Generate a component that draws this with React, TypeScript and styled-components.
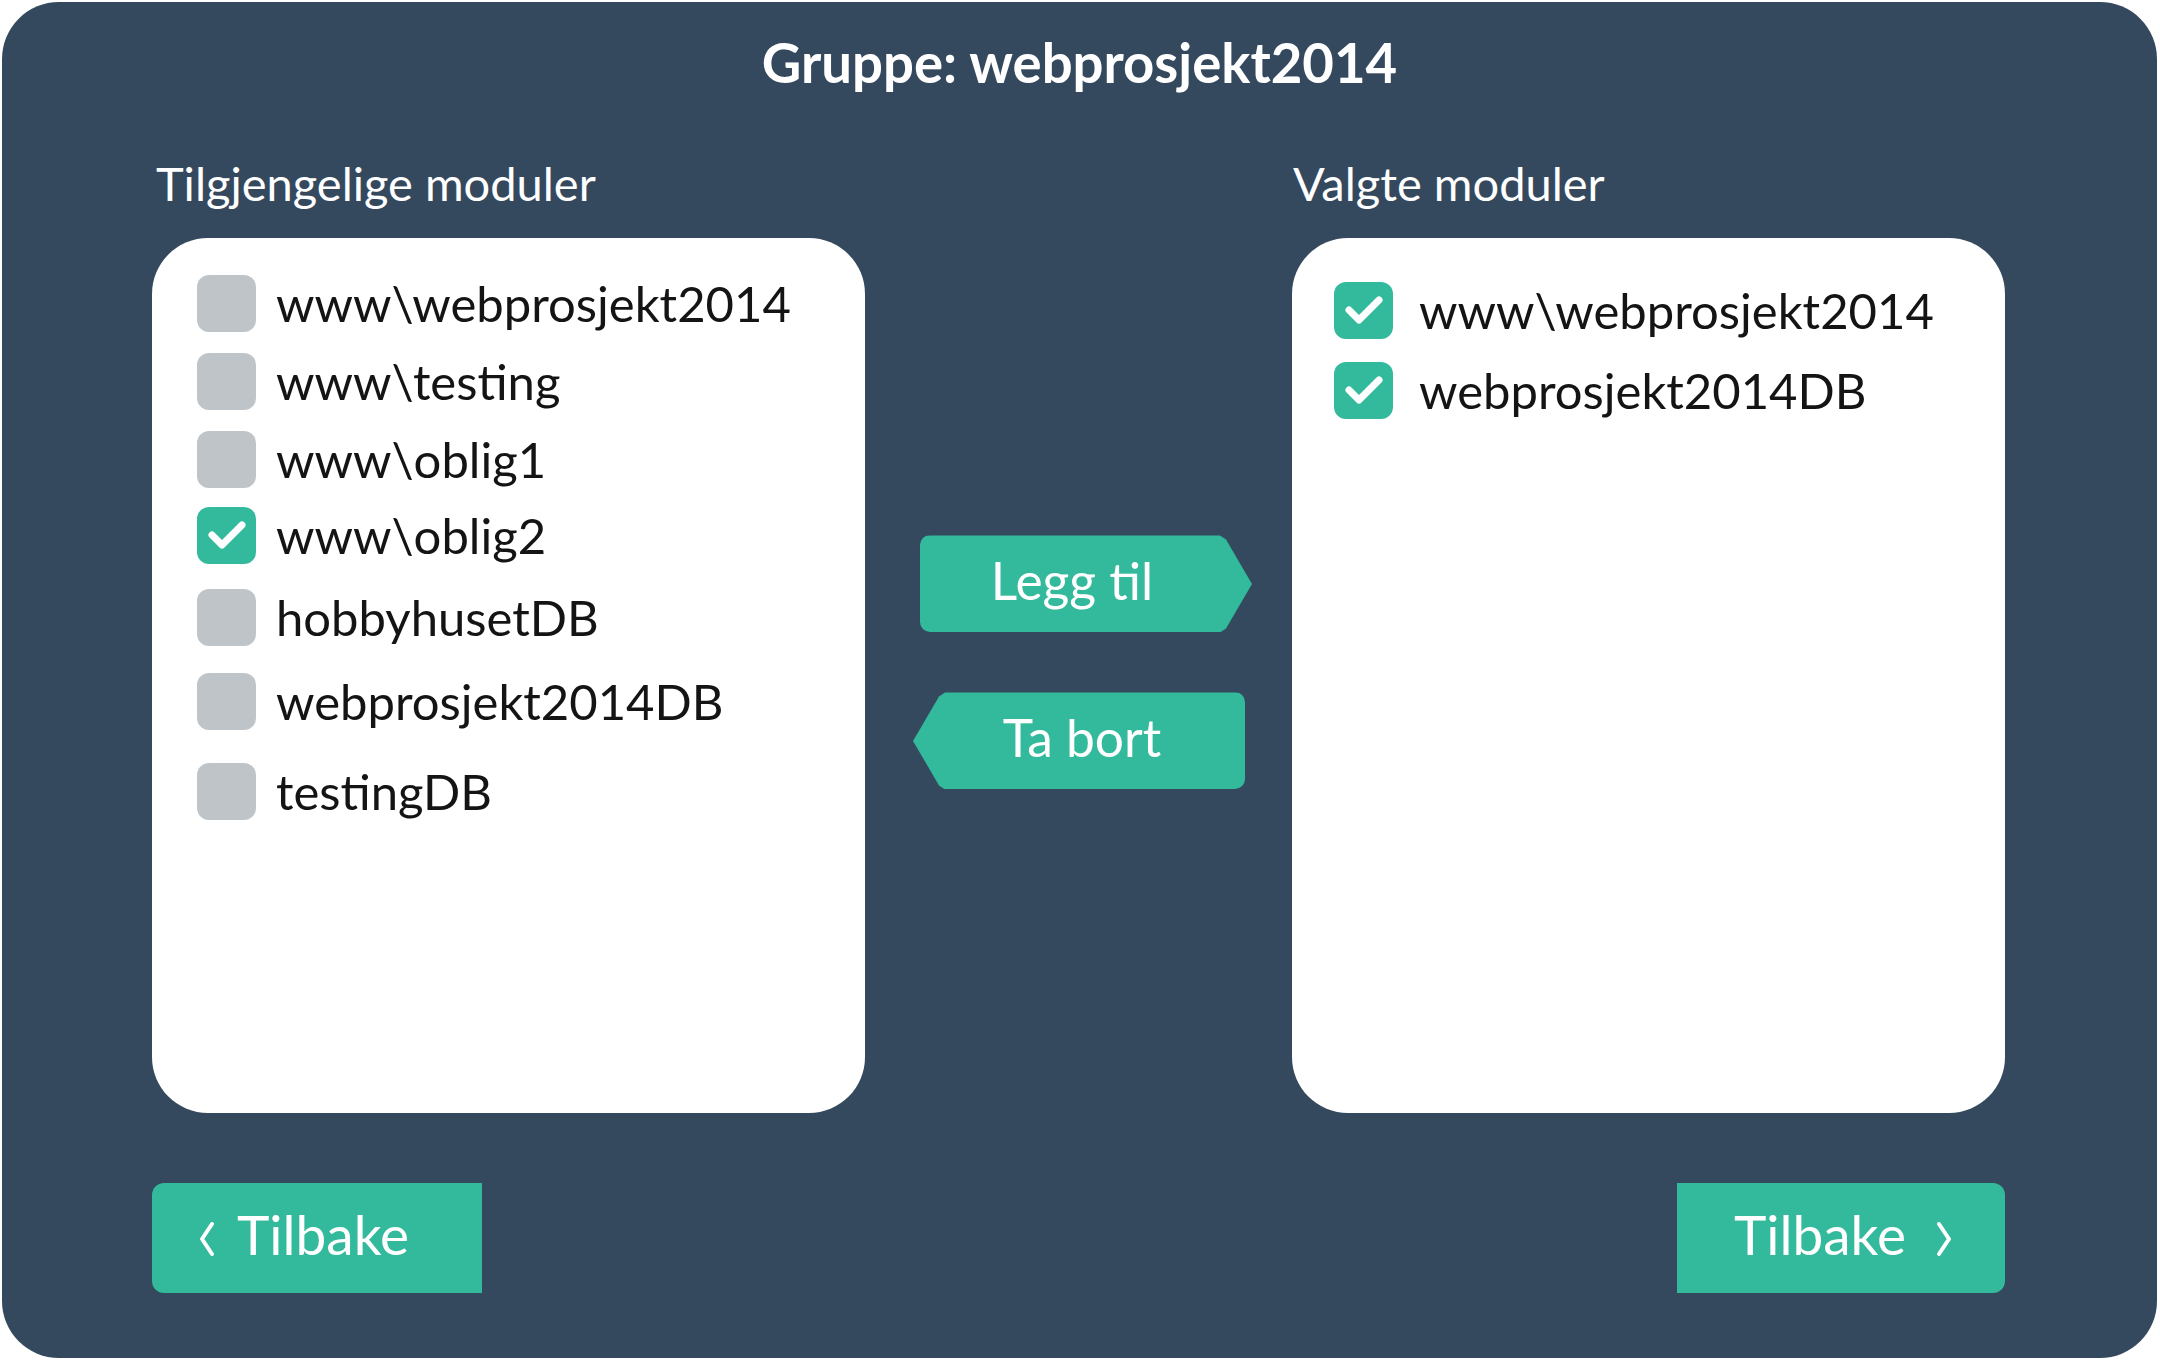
import React from "react";
import styled, { createGlobalStyle } from "styled-components";

const GlobalStyle = createGlobalStyle`
  html, body {
    margin: 0;
    padding: 0;
    background: #ffffff;
    font-family: Lato, "Open Sans", "Liberation Sans", sans-serif;
  }
  * { box-sizing: border-box; }
`;

const TEAL = "#33b99b";
const SLATE = "#35495e";

const Panel = styled.div`
  margin: 2px;
  width: 2155px;
  height: 1356px;
  border-radius: 57px;
  background: ${SLATE};
  padding: 28px 152px 0 150px;
  display: flex;
  flex-direction: column;
`;

const Title = styled.h1`
  margin: 0;
  font-size: 54.5px;
  line-height: 1.2;
  font-weight: 700;
  color: #ffffff;
  text-align: center;
  padding-left: 2px;
`;

const Columns = styled.div`
  display: grid;
  grid-template-columns: 713px 1fr 713px;
  margin-top: 60px;
`;

const Column = styled.div`
  display: flex;
  flex-direction: column;
`;

const Label = styled.div<{ $indent: number }>`
  font-size: 47px;
  line-height: 1.2;
  color: #ffffff;
  padding-left: ${(p) => p.$indent}px;
`;

const ListBox = styled.div<{ $padTop: number; $padLeft: number }>`
  margin-top: 26px;
  height: 875px;
  background: #ffffff;
  border-radius: 56px;
  padding: ${(p) => p.$padTop}px 20px 0 ${(p) => p.$padLeft}px;
  display: flex;
  flex-direction: column;
`;

const Row = styled.label<{ $top: number; $gap: number }>`
  display: flex;
  align-items: center;
  height: 57px;
  margin-top: ${(p) => p.$top}px;
  gap: ${(p) => p.$gap}px;
  font-size: 49px;
  color: #141414;
  white-space: nowrap;
`;

const Box = styled.span<{ $checked: boolean }>`
  flex: none;
  width: 59px;
  height: 57px;
  border-radius: 12px;
  background: ${(p) => (p.$checked ? TEAL : "#bfc4c8")};
  display: flex;
  align-items: center;
  justify-content: center;
`;

const Middle = styled.div`
  display: flex;
  flex-direction: column;
  padding-top: 380px;
`;

const ArrowButton = styled.button<{ $dir: "right" | "left"; $offset: number; $top: number }>`
  margin-top: ${(p) => p.$top}px;
  margin-left: ${(p) => p.$offset}px;
  width: 332px;
  height: 97px;
  border: none;
  background: ${TEAL};
  color: #ffffff;
  font-family: Lato, "Open Sans", sans-serif;
  font-size: 51.5px;
  line-height: 1;
  display: flex;
  align-items: center;
  justify-content: center;
  border-radius: 10px;
  padding: ${(p) => (p.$dir === "right" ? "0 28px 6px 0" : "0 0 6px 6px")};
  clip-path: ${(p) =>
    p.$dir === "right"
      ? "polygon(0 0, calc(100% - 32px) 0, calc(100% - 26px) 4px, 100% 50%, calc(100% - 26px) calc(100% - 4px), calc(100% - 32px) 100%, 0 100%)"
      : "polygon(32px 0, 100% 0, 100% 100%, 32px 100%, 26px calc(100% - 4px), 0 50%, 26px 4px)"};
  cursor: pointer;
`;

const Footer = styled.div`
  display: flex;
  justify-content: space-between;
  margin-top: 70px;
`;

const NavButton = styled.button<{ $side: "left" | "right" }>`
  width: ${(p) => (p.$side === "left" ? 330 : 328)}px;
  height: 110px;
  border: none;
  background: ${TEAL};
  color: #ffffff;
  font-family: Lato, "Open Sans", sans-serif;
  font-size: 55px;
  line-height: 1;
  display: flex;
  align-items: center;
  justify-content: ${(p) => (p.$side === "left" ? "flex-start" : "center")};
  gap: ${(p) => (p.$side === "left" ? 22 : 30)}px;
  padding: ${(p) => (p.$side === "left" ? "0 0 6px 47px" : "0 0 6px 4px")};
  border-radius: ${(p) => (p.$side === "left" ? "12px 0 0 12px" : "0 12px 12px 0")};
  cursor: pointer;
`;

const Check = () => (
  <svg width="40" height="32" viewBox="0 0 40 32">
    <polyline
      points="5,16 15,26 35,6"
      fill="none"
      stroke="#ffffff"
      strokeWidth="7"
      strokeLinecap="round"
      strokeLinejoin="round"
    />
  </svg>
);

const Chevron = ({ dir }: { dir: "left" | "right" }) => (
  <svg width="16" height="36" viewBox="0 0 16 36" style={{ marginTop: 8 }}>
    <polyline
      points={dir === "left" ? "13,3 3,18 13,33" : "3,3 13,18 3,33"}
      fill="none"
      stroke="#ffffff"
      strokeWidth="4"
      strokeLinecap="round"
      strokeLinejoin="round"
    />
  </svg>
);

const available = [
  { name: "www\\webprosjekt2014", checked: false, top: 0 },
  { name: "www\\testing", checked: false, top: 21 },
  { name: "www\\oblig1", checked: false, top: 21 },
  { name: "www\\oblig2", checked: true, top: 19 },
  { name: "hobbyhusetDB", checked: false, top: 25 },
  { name: "webprosjekt2014DB", checked: false, top: 27 },
  { name: "testingDB", checked: false, top: 33 },
];

const selected = [
  { name: "www\\webprosjekt2014", checked: true, top: 0 },
  { name: "webprosjekt2014DB", checked: true, top: 23 },
];

export default function App() {
  return (
    <>
      <GlobalStyle />
      <Panel>
        <Title>Gruppe: webprosjekt2014</Title>
        <Columns>
          <Column>
            <Label $indent={4}>Tilgjengelige moduler</Label>
            <ListBox $padTop={37} $padLeft={45}>
              {available.map((m) => (
                <Row key={m.name} $top={m.top} $gap={20}>
                  <Box $checked={m.checked}>{m.checked && <Check />}</Box>
                  {m.name}
                </Row>
              ))}
            </ListBox>
          </Column>
          <Middle>
            <ArrowButton $dir="right" $offset={55} $top={0}>
              Legg til
            </ArrowButton>
            <ArrowButton $dir="left" $offset={48} $top={60}>
              Ta bort
            </ArrowButton>
          </Middle>
          <Column>
            <Label $indent={1}>Valgte moduler</Label>
            <ListBox $padTop={44} $padLeft={42}>
              {selected.map((m) => (
                <Row key={m.name} $top={m.top} $gap={26}>
                  <Box $checked={m.checked}>{m.checked && <Check />}</Box>
                  {m.name}
                </Row>
              ))}
            </ListBox>
          </Column>
        </Columns>
        <Footer>
          <NavButton $side="left">
            <Chevron dir="left" />
            Tilbake
          </NavButton>
          <NavButton $side="right">
            Tilbake
            <Chevron dir="right" />
          </NavButton>
        </Footer>
      </Panel>
    </>
  );
}
